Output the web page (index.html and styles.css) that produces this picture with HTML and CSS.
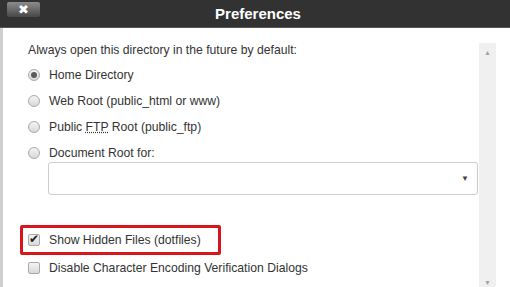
FILE: index.html
```html
<!DOCTYPE html>
<html lang="en">
<head>
    <meta charset="UTF-8">
    <title>Preferences</title>
    <link rel="stylesheet" href="styles.css">
</head>
<body>

    <div class="dialog">
        <div class="titlebar">
            <button class="close-btn" type="button">&#10006;</button>
            <div class="title">Preferences</div>
        </div>

        <div class="body">
            <div class="content">
                <div class="intro">Always open this directory in the future by default:</div>

                <label class="option"><input type="radio" name="dir" checked><span>Home Directory</span></label>
                <label class="option"><input type="radio" name="dir"><span>Web Root (public_html or www)</span></label>
                <label class="option"><input type="radio" name="dir"><span>Public <abbr title="File Transfer Protocol">FTP</abbr> Root (public_ftp)</span></label>
                <label class="option"><input type="radio" name="dir"><span>Document Root for:</span></label>

                <div class="select-box">
                    <span class="arrow">&#9660;</span>
                </div>

                <div class="highlight">
                    <label class="option"><input type="checkbox" checked><span>Show Hidden Files (dotfiles)</span></label>
                </div>
                <label class="option last"><input type="checkbox"><span>Disable Character Encoding Verification Dialogs</span></label>
            </div>

            <div class="scrollbar">
                <span class="scroll-up">&#9650;</span>
                <span class="scroll-down">&#9660;</span>
            </div>
        </div>
    </div>

</body>
</html>
```

FILE: styles.css
```css
body {
    margin: 0;
    font-family: "Liberation Sans", Arial, sans-serif;
    background: #fff;
    overflow: hidden;
}

.dialog {
    width: 510px;
    height: 287px;
    display: flex;
    flex-direction: column;
}

.titlebar {
    height: 27px;
    background: #323232;
    border-bottom: 1px solid #555;
    position: relative;
    display: flex;
    align-items: center;
    justify-content: center;
    flex-shrink: 0;
}

.close-btn {
    position: absolute;
    left: 7px;
    top: 2px;
    width: 33px;
    height: 15px;
    padding: 0;
    border: none;
    border-radius: 2px;
    background: linear-gradient(#8c8c8c, #474747);
    color: #fff;
    font-family: "DejaVu Sans", sans-serif;
    font-size: 13px;
    font-weight: bold;
    line-height: 15px;
}

.title {
    color: #fff;
    font-size: 15px;
    font-weight: bold;
    margin-left: 6px;
}

.body {
    flex: 1;
    display: flex;
    border-left: 3px solid #cfcfcf;
}

.content {
    flex: 1;
    padding: 15px 0 0 25px;
    color: #333;
    font-size: 12.2px;
}

.intro {
    margin-bottom: 5px;
}

.option {
    display: flex;
    align-items: center;
    height: 26px;
}

.option input {
    appearance: none;
    margin: 0 9px 0 0;
    width: 12px;
    height: 12px;
    border: 1px solid #a9a9a9;
    background: linear-gradient(#f4f4f4, #d8d8d8);
    position: relative;
    flex-shrink: 0;
}

.option input[type="radio"] {
    border-radius: 50%;
}

.option input[type="radio"]:checked::after {
    content: "";
    position: absolute;
    left: 2px;
    top: 2px;
    width: 6px;
    height: 6px;
    border-radius: 50%;
    background: #5a5a5a;
}

.option input[type="checkbox"] {
    border-radius: 2px;
}

.option input[type="checkbox"]:checked::after {
    content: "\2714";
    position: absolute;
    left: 0;
    top: -3px;
    font-family: "DejaVu Sans", sans-serif;
    font-size: 12px;
    color: #222;
}

abbr {
    text-decoration: underline dotted;
}

.select-box {
    margin: -4px 1px 0 20px;
    height: 31px;
    border: 1px solid #ccc;
    border-radius: 3px;
    display: flex;
    align-items: center;
    justify-content: flex-end;
    padding-right: 8px;
}

.arrow {
    font-size: 8px;
    color: #444;
}

.highlight {
    margin: 30px 0 0 -8px;
    width: 190px;
    padding-left: 5px;
    border: 3px solid #d9141b;
    border-radius: 2px;
}

.highlight .option {
    height: 24px;
}

.option.last {
    margin-top: 0;
}

.scrollbar {
    width: 17px;
    margin: 15px 14px 0 0;
    background: #f0f0f0;
    display: flex;
    flex-direction: column;
    justify-content: space-between;
    align-items: center;
    color: #a3a3a3;
    font-size: 7px;
}

.scroll-up {
    margin-top: 6px;
}

.scroll-down {
    margin-bottom: 1px;
}
```
